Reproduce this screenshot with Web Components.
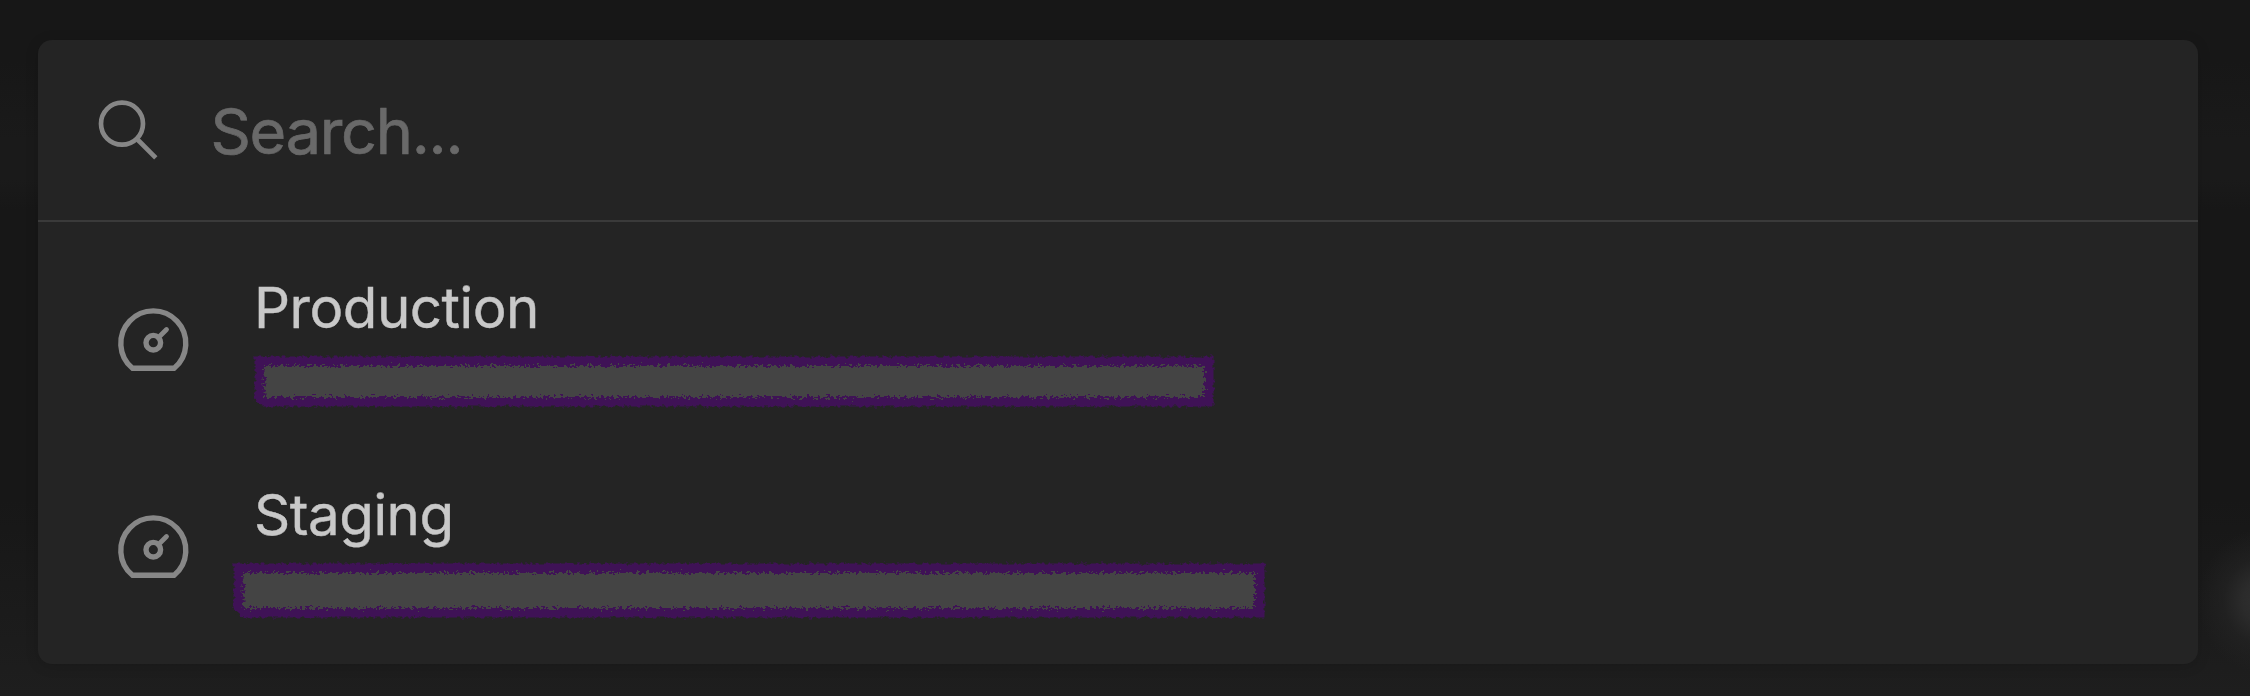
<!DOCTYPE html>
<html lang="en">
<head>
<meta charset="utf-8">
<title>Environments</title>
<style>
html,body{margin:0;height:100%;background:#181818;overflow:hidden}
</style>
</head>
<body>
<command-palette>
  <search-field slot="search" placeholder="Search..."></search-field>
  <env-item label="Production"><redacted-line kind="short"></redacted-line></env-item>
  <env-item label="Staging"><redacted-line kind="long"></redacted-line></env-item>
</command-palette>
<script>
const mount = (el, html) => { el.attachShadow({mode:'open'}).innerHTML = html; };

customElements.define('command-palette', class extends HTMLElement {
  constructor(){ super(); mount(this, `
<style>
:host{display:block;box-sizing:border-box;width:2250px;height:696px;padding:40px 52px 32px 38px;
  font-family:Inter,"Liberation Sans",sans-serif;
  background:radial-gradient(ellipse 64px 72px at 2262px 601px,#303030 0%,#2b2b2b 30%,rgba(36,36,36,.6) 60%,rgba(30,30,30,0) 100%),
  linear-gradient(#171717 0,#171717 60px,#1a1a1a 140px,#1a1a1a 180px,#171717 210px,#171717 500px,#1c1c1c 640px,#1e1e1e 100%)}
.panel{box-sizing:border-box;width:2160px;height:624px;border-radius:14px;background:#242424;overflow:hidden;
  box-shadow:0 2px 14px rgba(0,0,0,.14)}
.list{display:flex;flex-direction:column}
</style>
<div class="panel"><slot name="search"></slot><div class="list"><slot></slot></div></div>`); }
});

customElements.define('search-field', class extends HTMLElement {
  constructor(){ super(); mount(this, `
<style>
:host{display:flex;align-items:flex-start;box-sizing:border-box;height:182px;padding-left:56px;border-bottom:2px solid #3a3a3a}
svg{flex:none;width:68px;height:68px;margin-top:56px;fill:none;stroke:#868686;stroke-width:4.7}
span{margin:51px 0 0 48.5px;font-size:63px;line-height:80px;letter-spacing:-1.3px;color:#696969;-webkit-text-stroke:.7px #696969;white-space:nowrap}
</style>
<svg viewBox="0 0 68 68"><circle cx="28" cy="27.7" r="21"/><path d="M43 43 61.8 61.8"/></svg>
<span></span>`); }
  connectedCallback(){ this.shadowRoot.querySelector('span').textContent = this.getAttribute('placeholder'); }
});

customElements.define('env-item', class extends HTMLElement {
  constructor(){ super(); mount(this, `
<style>
:host{display:flex;box-sizing:border-box;height:207px;padding-left:78px}
svg{flex:none;width:76px;height:70px;margin-top:82px;fill:none;stroke:#878787;stroke-width:5.4}
.text{margin:50px 0 0 62px}
.label{height:73px;font-size:56.5px;line-height:71px;letter-spacing:-.5px;color:#c8c8c8;-webkit-text-stroke:.4px #c8c8c8;white-space:nowrap}
</style>
<svg viewBox="0 0 76 70"><path d="M16.5 64.3A32.5 32.5 0 1 1 58.1 64.3Z"/><circle cx="37.3" cy="38.7" r="7.3"/><path d="M42.5 33.5 50.5 25.5" stroke-linecap="round" stroke-width="4.8"/></svg>
<div class="text"><div class="label"></div><slot></slot></div>`); }
  connectedCallback(){ this.shadowRoot.querySelector('.label').textContent = this.getAttribute('label'); }
});

// Hides the address line behind a rough chalk-edged bar.
customElements.define('redacted-line', class extends HTMLElement {
  connectedCallback(){
    const long = this.getAttribute('kind') === 'long';
    const w = long ? 1032 : 960, h = long ? 55 : 51;
    mount(this, `
<style>
:host{display:block;margin:${long ? '11px 0 0 -21px' : '11px 0 0 0'}}
svg{display:block;overflow:visible}
</style>
<svg width="${w}" height="${h}" viewBox="0 0 ${w} ${h}">
<filter id="outer" filterUnits="userSpaceOnUse" x="-8" y="-8" width="${w+16}" height="${h+16}" color-interpolation-filters="sRGB">
<feTurbulence type="fractalNoise" baseFrequency=".25" numOctaves="2" seed="4"/><feDisplacementMap in="SourceGraphic" scale="6" xChannelSelector="R" yChannelSelector="G"/></filter>
<filter id="inner" filterUnits="userSpaceOnUse" x="-8" y="-8" width="${w+16}" height="${h+16}" color-interpolation-filters="sRGB">
<feTurbulence type="fractalNoise" baseFrequency=".3 .4" numOctaves="3" seed="9"/><feDisplacementMap in="SourceGraphic" scale="12" xChannelSelector="R" yChannelSelector="G"/></filter>
<path filter="url(#outer)" fill="#3f1256" d="M.5 .5H${w-.5}V${h-.5}H9L.5 ${h-8}Z"/>
<path filter="url(#inner)" fill="#444" d="M10.5 10H${w-10}V${h-10}H10.5Z"/>
<path fill="#444" d="M13 12H${w-12}V${h-13}H13Z"/>
</svg>`);
  }
});
</script>
</body>
</html>
